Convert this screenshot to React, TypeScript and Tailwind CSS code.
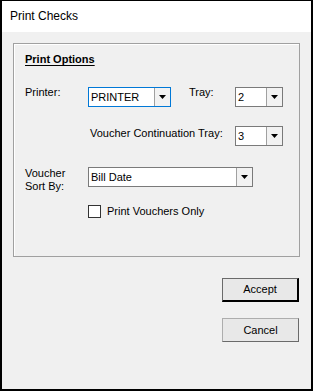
import React from "react";

const font = { fontFamily: '"Liberation Sans", Arial, sans-serif' };

function Arrow() {
  return (
    <svg width="7" height="4" viewBox="0 0 7 4">
      <path d="M0 0 H7 L3.5 4 Z" fill="#000" />
    </svg>
  );
}

function Combo({
  cls,
  text,
  focused,
}: {
  cls: string;
  text: string;
  focused?: boolean;
}) {
  return (
    <div
      className={`flex h-[20px] bg-white border ${
        focused ? "border-[#0078d7]" : "border-[#7a7a7a]"
      } ${cls}`}
    >
      <div className="flex flex-1 items-center pl-[2px] text-[11px] leading-[13px] text-black overflow-hidden whitespace-nowrap">
        {text}
      </div>
      <div className="flex w-[16px] items-center justify-center border-l border-[#a0a0a0] bg-[#f2f2f2] pb-[1px]">
        <Arrow />
      </div>
    </div>
  );
}

export default function App() {
  return (
    <div
      className="w-[313px] h-[391px] border-l-2 border-t border-r-2 border-b-2 border-black flex flex-col text-black"
      style={font}
    >
      {/* Title bar */}
      <div className="h-[31px] bg-white pl-[8px] pt-[8px] text-[12px] leading-[14px] shrink-0">
        Print Checks
      </div>

      {/* Body */}
      <div className="flex-1 bg-[#f0f0f0] flex flex-col pt-[11px]">
        {/* Group box */}
        <div className="ml-[11px] w-[287px] h-[214px] border border-[#a0a0a0] shadow-[inset_1px_1px_0_#ffffff] pl-[11px] pt-[9px] text-[11px] leading-[13px] shrink-0">
          <div className="font-bold underline decoration-1 underline-offset-2">
            Print Options
          </div>

          {/* Row 1 */}
          <div className="flex items-start mt-[20px]">
            <div className="w-[63px]">Printer:</div>
            <Combo cls="w-[83px] mt-[1px]" text="PRINTER" focused />
            <div className="w-[46px] ml-[18px]">Tray:</div>
            <Combo cls="w-[48px] mt-[1px]" text="2" />
          </div>

          {/* Row 2 */}
          <div className="flex items-start mt-[19px] ml-[65px]">
            <div className="w-[145px] mt-[1px]">Voucher Continuation Tray:</div>
            <Combo cls="w-[48px]" text="3" />
          </div>

          {/* Row 3 */}
          <div className="flex items-start mt-[21px]">
            <div className="w-[63px]">
              Voucher
              <br />
              Sort By:
            </div>
            <Combo cls="w-[165px]" text="Bill Date" />
          </div>

          {/* Row 4 */}
          <div className="flex items-start mt-[12px] ml-[63px]">
            <div className="w-[13px] h-[13px] border border-[#333333] bg-white" />
            <div className="ml-[6px]">Print Vouchers Only</div>
          </div>
        </div>

        {/* Buttons */}
        <div className="flex flex-col items-end mr-[12px] mt-[21px] text-[11px] leading-[13px]">
          <button className="w-[77px] h-[24px] bg-[#e8e8e8] border border-[#6a6a6a] border-r-2 border-b-2 border-r-black border-b-black flex items-center justify-center">
            Accept
          </button>
          <button className="w-[77px] h-[24px] mt-[16px] bg-[#e8e8e8] border border-[#adadad] border-r-[#6a6a6a] border-b-[#6a6a6a] flex items-center justify-center">
            Cancel
          </button>
        </div>
      </div>
    </div>
  );
}
